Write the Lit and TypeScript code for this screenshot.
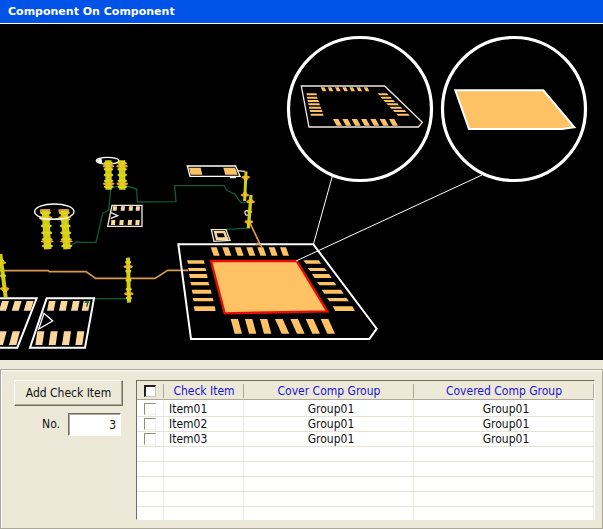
import { LitElement, html, css, svg } from "lit";
import { customElement, state } from "lit/decorators.js";

type Point = [number, number];

/** Four-cornered pad: top edge x..x+w, bottom edge shifted by the slant. */
const pad = (x: number, y: number, w: number, h: number, slant = 0) =>
  `M${x} ${y}h${w}l${slant} ${h}h${-w}z`;

const pads = (xs: number[], y: number, w: number, h: number, slant = 0) =>
  xs.map((x) => pad(x, y, w, h, slant)).join("");

/** Pads stacked in a column, each entry being [x, y, width, height]. */
const column = (rows: [number, number, number, number][], slant: number) =>
  rows.map(([x, y, w, h]) => pad(x, y, w, h, slant)).join("");

/** A via pin: yellow core with ribs and two orange collars. */
const pin = (a: Point, b: Point, width: number, ribs: number) => {
  const at = (t: number): Point => [a[0] + (b[0] - a[0]) * t, a[1] + (b[1] - a[1]) * t];
  const marks = Array.from({ length: ribs }, (_, i) => at((i + 0.5) / ribs));
  const collars = [at(0.2), at(0.8)];
  return svg`
    <path class="core" stroke-width=${width} d="M${a[0]} ${a[1]}L${b[0]} ${b[1]}"/>
    ${marks.map(([x, y]) => svg`<ellipse class="rib" cx=${x} cy=${y} rx=${width * 0.75} ry="5"/>`)}
    ${collars.map(([x, y]) => svg`<ellipse class="collar" cx=${x} cy=${y} rx=${width * 0.5 + 8} ry="5"/>`)}
    ${collars.map(([x, y]) => svg`<ellipse class="rib" cx=${x} cy=${y} rx=${width * 0.4} ry="5"/>`)}
  `;
};

@customElement("board-view")
export class BoardView extends LitElement {
  static styles = css`
    :host { display: block; background: #000; }
    svg { display: block; width: 100%; height: auto; }
    .line { fill: none; stroke: #fff; stroke-width: 4; }
    .chip { fill: none; stroke: #fff; stroke-width: 6; }
    .soft { fill: none; stroke: #efe8e0; stroke-width: 4; }
    .ring { fill: none; stroke: #fff; stroke-width: 3.2; }
    .lead { fill: none; stroke: #fff; stroke-width: 1; }
    .gold { fill: #fec164; }
    .pale { fill: #fbd79b; }
    .green { fill: none; stroke: #0a5c3c; stroke-width: 4; }
    .copper { fill: none; stroke: #d99a50; stroke-width: 5; }
    .core { fill: none; stroke: #d0d010; }
    .rib { fill: #dad41c; }
    .collar { fill: #eda52e; }
    .area { fill: #fec164; stroke: #e80c04; stroke-width: 7; }
    .cover { fill: #fec164; stroke: #fff; stroke-width: 6; }
  `;

  render() {
    const k = "scale(.33333)";
    return html`
      <svg viewBox="0 24 603 336" role="img" aria-label="Component placed on another component">
        <g transform="translate(0 190) ${k}">
          <path class="copper" d="M0 242H145L148 245H258L287 265H465L503 241H565"/>
          <path class="green" d="M285 326H385M212 168L230 156H240"/>
          <path class="chip" d="M-5 325H110L52 473H-5M140 325H282L255 473H90Z"/>
          <path class="pale" d="${pads([6, 44, 80], 333, 21, 29, -9)}${pads([-2, 38], 424, 22, 41, -11)}"/>
          <path class="pale" d="${pads([147, 183, 219, 251], 333, 20, 29, -6)}${pads([112, 152, 192, 232], 424, 21, 41, -6)}"/>
          <path class="green" d="M254 336H268M263 338L260 350"/>
          <path class="line" d="M132 370L158 393L116 417Z"/>
          <ellipse class="line" cx="163" cy="65" rx="59" ry="23"/>
          ${pin([136, 58], [143, 178], 22, 6)}
          ${pin([192, 58], [201, 178], 22, 6)}
          <path class="line" d="M118 84Q163 92 206 83"/>
          <path class="copper" d="M122 66V60H148V66M178 66V60H205V66"/>
          ${pin([384, 203], [387, 338], 12, 5)}
          ${pin([1, 192], [17, 322], 12, 3)}
        </g>

        <g transform="translate(80 145) ${k}">
          <path class="green" d="M92 135L86 195L68 205L48 292H0M94 128L118 123H140L170 132L172 171L288 170L284 122H433L440 135L465 148L482 172H497M435 253L502 250"/>
          <path class="soft" d="M96 181H186V244H83Z"/>
          <path class="pale" d="${pads([99, 123, 147, 168], 184, 12, 13, -1)}${pads([94, 119, 144, 167], 225, 12, 15, -1)}"/>
          <path class="soft" d="M93 203L113 212L92 220"/>
          <ellipse class="line" cx="83" cy="47" rx="34" ry="10"/>
          <path fill="#fff" d="M50 46L64 39L67 55L56 54Z"/>
          ${pin([85, 46], [86, 134], 19, 5)}
          ${pin([126, 46], [127, 134], 19, 5)}
          <path class="line" d="M322 63H467L480 94H330Z"/>
          <path class="gold" d="M327 68H362L367 89H332ZM430 68H465L473 89H436Z"/>
          <path class="soft" d="M450 98H468M470 77L495 79"/>
          <path class="copper" d="M508 230L539 295"/>
          ${pin([498, 79], [494, 168], 9, 2)}
          ${pin([513, 150], [505, 250], 10, 3)}
          <path class="soft" d="M504 196Q494 196 495 204T504 210"/>
          <path class="soft" d="M394 254H438L450 286L402 289Z"/>
          <path class="pale" d="M401 258H435L438 265H403ZM407 277H444L446 286H409ZM401 258H408L416 286H408ZM428 258H435L446 286H438Z"/>
        </g>

        <g transform="translate(170 230) ${k}">
          <path class="chip" d="M25 43H430L620 296L598 327H63Z"/>
          <path class="gold" d="${pads([122, 157, 194, 229, 262, 296, 330], 52, 18, 25, 9)}"/>
          <path class="gold" d="${column([[51, 91, 50, 10], [54, 114, 52, 9], [57, 132, 53, 12], [61, 156, 54, 10], [65, 179, 57, 12], [68, 204, 60, 10], [71, 229, 63, 14]], 3)}"/>
          <path class="gold" d="${column([[400, 91, 46, 10], [413, 114, 50, 9], [426, 132, 51, 12], [441, 156, 51, 10], [455, 179, 58, 12], [471, 204, 58, 10], [488, 229, 59, 14]], 8)}"/>
          <path class="gold" d="${pads([182, 225, 270], 267, 22, 44, 12)}${pads([315, 361, 407, 452], 267, 23, 44, 20)}"/>
          <path class="area" d="M123 93H380L472 244L164 250Z"/>
          <path class="copper" d="M258 46L262 40L272 45L276 54"/>
        </g>

        <path class="lead" d="M332.500 175.500L313.500 244M482 175L296 261"/>
        <circle class="ring" cx="360" cy="109" r="71.500"/>
        <circle class="ring" cx="514" cy="109" r="71.500"/>

        <g transform="translate(280 25) ${k}">
          <path class="soft" d="M64 183H314L427 292L415 306H87Z"/>
          <path class="gold" d="${pads([122, 143, 165, 187, 208, 229, 251], 187, 11, 12, 6)}"/>
          <path class="gold" d="${column([[79, 205, 30, 6], [80, 215, 31, 6], [82, 225, 33, 6], [84, 235, 34, 6], [86, 245, 36, 6], [89, 255, 37, 6], [91, 266, 38, 6]], 2)}"/>
          <path class="gold" d="${column([[293, 205, 28, 6], [301, 215, 30, 6], [310, 225, 30, 6], [319, 235, 33, 6], [329, 245, 33, 6], [339, 255, 35, 6], [349, 266, 35, 6]], 5)}"/>
          <path class="gold" d="${pads([159, 187, 215, 243, 271, 299, 327], 282, 16, 20, 11)}"/>
        </g>

        <path class="cover" transform="translate(435 25) ${k}" d="M61 196H325L418 307L380 312H102Z"/>
      </svg>
    `;
  }
}

@customElement("app-root")
export class AppRoot extends LitElement {
  static styles = css`
    :host {
      display: block;
      background: #ece9d8;
      color: #111;
      font: 12px/15px "DejaVu Sans Condensed", "DejaVu Sans", sans-serif;
    }
    .title {
      margin: 0;
      padding: 0 8px;
      background: #0152e6;
      border-bottom: 1px solid #fff;
      color: #fff;
      font-family: "DejaVu Sans", sans-serif;
      font-size: 11px;
      font-weight: 700;
      line-height: 23px;
    }
    .panel {
      display: flex;
      align-items: flex-start;
      gap: 13px;
      margin-top: 9px;
      padding: 10px 7px 8px 13px;
      border: 1px solid #aca899;
      box-shadow: inset 1px 1px #fff;
    }
    .side { flex: none; width: 109px; }
    .add {
      display: block;
      width: 100%;
      height: 26px;
      padding: 0;
      border: 1px solid;
      border-color: #fff #716f64 #716f64 #fff;
      box-shadow: inset -1px -1px #aca899;
      background: #ece9d8;
      color: inherit;
      font: inherit;
    }
    .field {
      display: flex;
      align-items: center;
      justify-content: flex-end;
      gap: 8px;
      margin-top: 7px;
      padding-right: 2px;
    }
    .number {
      box-sizing: border-box;
      width: 53px;
      height: 23px;
      padding: 0 4px;
      border: 1px solid;
      border-color: #716f64 #fff #fff #716f64;
      box-shadow: inset 1px 1px #aca899;
      background: #fff;
      color: inherit;
      font: inherit;
      text-align: right;
    }
    .list {
      flex: 1;
      border: 1px solid;
      border-color: #716f64 #fff #fff #716f64;
      background: #fff;
    }
    .grid {
      width: 100%;
      table-layout: fixed;
      border-collapse: separate;
      border-spacing: 0;
    }
    .tick { width: 27px; }
    .item { width: 80px; }
    .cover { width: 170px; }
    th {
      height: 16px;
      padding: 2px 0 0;
      background: linear-gradient(#aca899, #aca899) right 3px / 1px 14px no-repeat #ece9d8;
      border-bottom: 1px solid #aca899;
      color: #1c14d8;
      font-weight: 400;
    }
    td {
      height: 14px;
      padding: 0 0 0 5px;
      border-right: 1px solid #ebe9e0;
      border-bottom: 1px solid #e4e2d6;
      line-height: 14px;
      text-align: center;
    }
    .first td { padding-top: 2px; }
    .last td { height: 12px; border-bottom: 0; }
    td.pick { padding-left: 0; }
    .name { text-align: left; }
    .box {
      appearance: none;
      display: block;
      box-sizing: border-box;
      width: 12px;
      height: 12px;
      margin: 0 0 0 7px;
      border: 1px solid;
      border-color: #8f8c80 #f3f1e8 #f3f1e8 #8f8c80;
      background: #fff;
    }
    th .box {
      border-width: 2px 1px 1px 2px;
      border-color: #222 #c8c5b8 #c8c5b8 #222;
    }
    .box:checked { background: #1c14d8; }
  `;

  @state() private rows = ["Item01", "Item02", "Item03"].map((name) => ({
    name,
    cover: "Group01",
    covered: "Group01",
  }));

  render() {
    const blanks = ["", "", "", "", "last"];
    return html`
      <h1 class="title">Component On Component</h1>
      <board-view></board-view>
      <section class="panel">
        <div class="side">
          <button class="add" type="button">Add Check Item</button>
          <div class="field">
            <label for="count">No.</label>
            <input class="number" id="count" type="text" inputmode="numeric" value="3" />
          </div>
        </div>
        <div class="list">
          <table class="grid">
            <colgroup>
              <col class="tick" /><col class="item" /><col class="cover" /><col />
            </colgroup>
            <thead>
              <tr>
                <th><input class="box" type="checkbox" aria-label="Select all" /></th>
                <th>Check Item</th>
                <th>Cover Comp Group</th>
                <th>Covered Comp Group</th>
              </tr>
            </thead>
            <tbody>
              ${this.rows.map(
                (row, i) => html`<tr class=${i === 0 ? "first" : ""}>
                  <td class="pick"><input class="box" type="checkbox" aria-label=${row.name} /></td>
                  <td class="name">${row.name}</td>
                  <td>${row.cover}</td>
                  <td>${row.covered}</td>
                </tr>`
              )}
              ${blanks.map((kind) => html`<tr class=${kind}><td></td><td></td><td></td><td></td></tr>`)}
            </tbody>
          </table>
        </div>
      </section>
    `;
  }
}
